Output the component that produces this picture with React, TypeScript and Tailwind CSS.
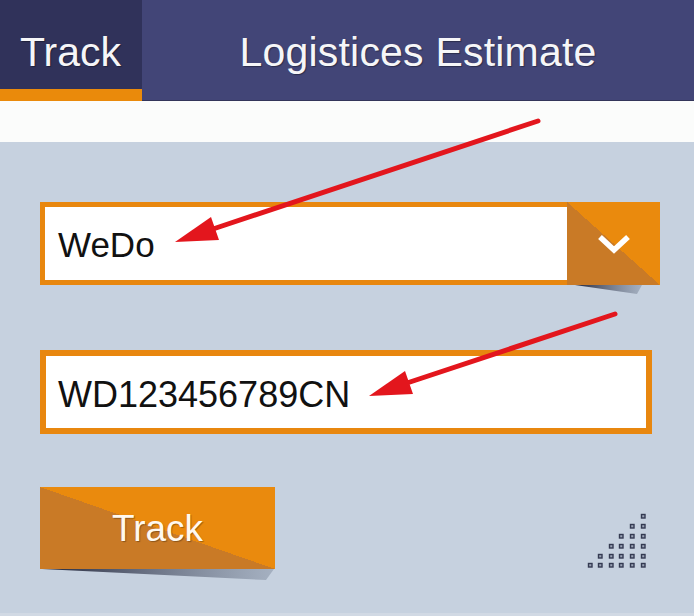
import React from "react";

const ORANGE = "#ea8a0d";

function SignalDots() {
  const cols = [3, 13, 24, 34, 45, 56];
  const rows = [4, 14, 24, 34, 44, 53];
  const dots: React.ReactNode[] = [];
  rows.forEach((y, r) => {
    cols.forEach((x, c) => {
      // staircase: row r shows the last r+1 columns
      if (c >= cols.length - 1 - r) {
        dots.push(
          <rect key={`${r}-${c}`} x={x - 1.5} y={y - 1.5} width={3.5} height={3.5} fill="#9aa3b6" stroke="#343a52" strokeWidth={1.4} />
        );
      }
    });
  });
  return (
    <svg width={60} height={57} viewBox="0 0 60 57" className="mr-[7px]">
      {dots}
    </svg>
  );
}

function Arrows() {
  return (
    <svg width={694} height={616} viewBox="0 0 694 616" className="absolute inset-0 pointer-events-none">
      <line x1={538} y1={121} x2={213} y2={229} stroke="#e3161d" strokeWidth={5} strokeLinecap="round" />
      <polygon points="175,242 219,240 211,217" fill="#e3161d" />
      <line x1={615} y1={314} x2={407} y2={383} stroke="#e3161d" strokeWidth={5} strokeLinecap="round" />
      <polygon points="369,396 413,394 405,371" fill="#e3161d" />
    </svg>
  );
}

function Shadows() {
  return (
    <svg width={694} height={616} viewBox="0 0 694 616" className="absolute inset-0 pointer-events-none">
      <defs>
        <linearGradient id="sh" x1="0" y1="0" x2="1" y2="0">
          <stop offset="0" stopColor="#23263a" />
          <stop offset="1" stopColor="#8f9bad" stopOpacity={0.6} />
        </linearGradient>
      </defs>
      <polygon points="42,569 274,569 266,580" fill="url(#sh)" />
      <polygon points="575,285 642,285 637,294" fill="url(#sh)" />
    </svg>
  );
}

export default function App() {
  return (
    <div className="relative w-[694px] h-[616px] overflow-hidden flex flex-col bg-[#c6d1df] font-['Liberation_Sans',Arial,sans-serif]">
      {/* tab header */}
      <div className="flex h-[101px]">
        <div className="w-[142px] flex flex-col">
          <div className="h-[89px] bg-[#30325a] text-[#f6f6f8] text-[41px] leading-none pt-[32px] pl-[20px] [text-shadow:1px_1px_1px_rgba(0,0,0,0.35)]">
            Track
          </div>
          <div className="h-[12px] bg-[#ea8a0b]" />
        </div>
        <div className="flex-1 bg-[#424577] border-b border-[#33355a] text-[#f6f6f8] text-[41px] leading-none pt-[32px] text-center tracking-[0.2px] [text-shadow:1px_1px_1px_rgba(0,0,0,0.35)]">
          Logistices Estimate
        </div>
      </div>
      <div className="h-[41px] bg-[#fbfcfb]" />

      <div className="flex-1 flex flex-col px-[40px] pt-[60px] border-b-[3px] border-[#d1d9e4]">
        {/* carrier select */}
        <div className="flex w-[620px] h-[83px] bg-[#e8870f]">
          <div className="flex-1 flex items-center bg-white my-[5px] ml-[5px] pl-[13px] pt-[2px] text-[35px] leading-none text-[#111]">
            WeDo
          </div>
          <div className="w-[93px] flex items-center justify-center bg-[linear-gradient(to_top_right,#c97a26_50%,#ea8a0d_50%)]">
            <svg width={34} height={22} viewBox="0 0 34 22">
              <polyline points="3,4 17,17 31,4" fill="none" stroke="#fff" strokeWidth={5.5} strokeLinejoin="miter" />
            </svg>
          </div>
        </div>

        {/* tracking number */}
        <div className="mt-[65px] w-[612px] h-[84px] border-[6px] border-[#e8870f] bg-white flex items-center pl-[12px] pt-[6px] text-[36px] leading-none text-[#111]">
          WD123456789CN
        </div>

        <div className="mt-[53px] flex items-end justify-between">
          <button
            className="w-[235px] h-[82px] flex items-center justify-center text-[37px] leading-none text-[#fff9f0] [text-shadow:1px_1px_1px_rgba(0,0,0,0.3)]"
            style={{ background: `linear-gradient(to top right, #c97a26 50%, ${ORANGE} 50%)` }}
          >
            Track
          </button>
          <SignalDots />
        </div>
      </div>

      <Shadows />
      <Arrows />
    </div>
  );
}
